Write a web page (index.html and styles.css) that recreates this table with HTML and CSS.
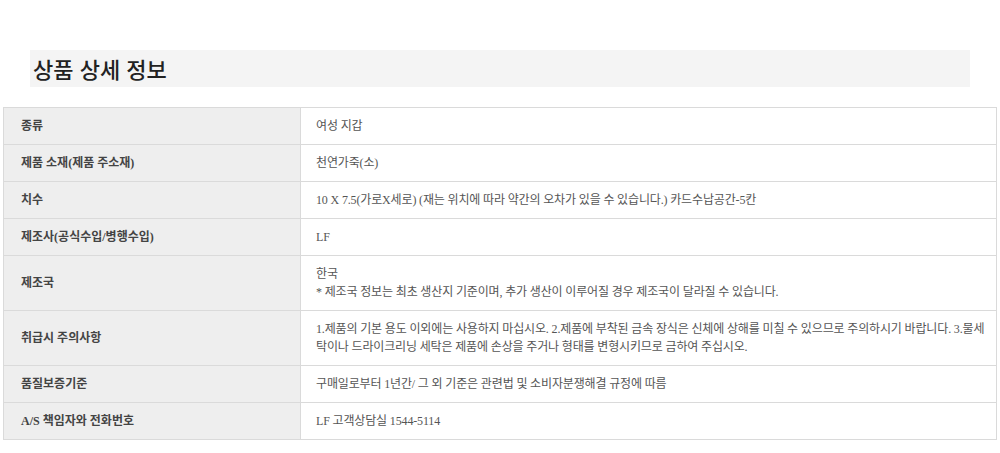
FILE: index.html
```html
<!DOCTYPE html>
<html lang="ko">
<head>
<meta charset="utf-8">
<title>상품 상세 정보</title>
<link rel="stylesheet" href="styles.css">
</head>
<body>
<div class="page">
  <h2 class="title">상품 상세 정보</h2>
  <table class="spec">
    <colgroup><col class="col-label"><col></colgroup>
    <tbody>
      <tr><th>종류</th><td>여성 지갑</td></tr>
      <tr><th>제품 소재(제품 주소재)</th><td>천연가죽(소)</td></tr>
      <tr><th>치수</th><td>10 X 7.5(가로X세로) (재는 위치에 따라 약간의 오차가 있을 수 있습니다.) 카드수납공간-5칸</td></tr>
      <tr><th>제조사(공식수입/병행수입)</th><td>LF</td></tr>
      <tr><th>제조국</th><td>한국<br>* 제조국 정보는 최초 생산지 기준이며, 추가 생산이 이루어질 경우 제조국이 달라질 수 있습니다.</td></tr>
      <tr><th>취급시 주의사항</th><td>1.제품의 기본 용도 이외에는 사용하지 마십시오. 2.제품에 부착된 금속 장식은 신체에 상해를 미칠 수 있으므로 주의하시기 바랍니다. 3.물세탁이나 드라이크리닝 세탁은 제품에 손상을 주거나 형태를 변형시키므로 금하여 주십시오.</td></tr>
      <tr><th>품질보증기준</th><td>구매일로부터 1년간/ 그 외 기준은 관련법 및 소비자분쟁해결 규정에 따름</td></tr>
      <tr><th>A/S 책임자와 전화번호</th><td>LF 고객상담실 1544-5114</td></tr>
    </tbody>
  </table>
</div>
</body>
</html>
```

FILE: styles.css
```css
html, body {
  margin: 0;
  padding: 0;
  background: #fff;
}

.page {
  padding: 50px 3px 0;
}

.title {
  margin: 0 27px 20px;
  height: 37px;
  padding-left: 3px;
  background: #f4f4f4;
  font-family: "Noto Sans CJK KR", "Noto Sans", sans-serif;
  font-size: 22px;
  font-weight: 500;
  line-height: 37px;
  color: #222;
}

.spec {
  width: 100%;
  border-collapse: collapse;
  border: 1px solid #d6d6d6;
  table-layout: fixed;
  font-size: 12px;
  line-height: 18px;
}

.col-label {
  width: 297px;
}

.spec th,
.spec td {
  border: 1px solid #dadada;
  padding: 9px 16px;
  vertical-align: middle;
  text-align: left;
}

.spec th {
  background: #eeeeee;
  color: #444;
  font-family: "Liberation Serif", "Noto Sans CJK KR", serif;
  font-size: 12px;
  font-weight: 700;
  padding-left: 17px;
}

.spec td {
  background: #fff;
  color: #555;
  font-family: "Liberation Serif", "Noto Sans CJK KR", serif;
  letter-spacing: -0.15px;
  padding-left: 15px;
  padding-right: 4px;
}
```
